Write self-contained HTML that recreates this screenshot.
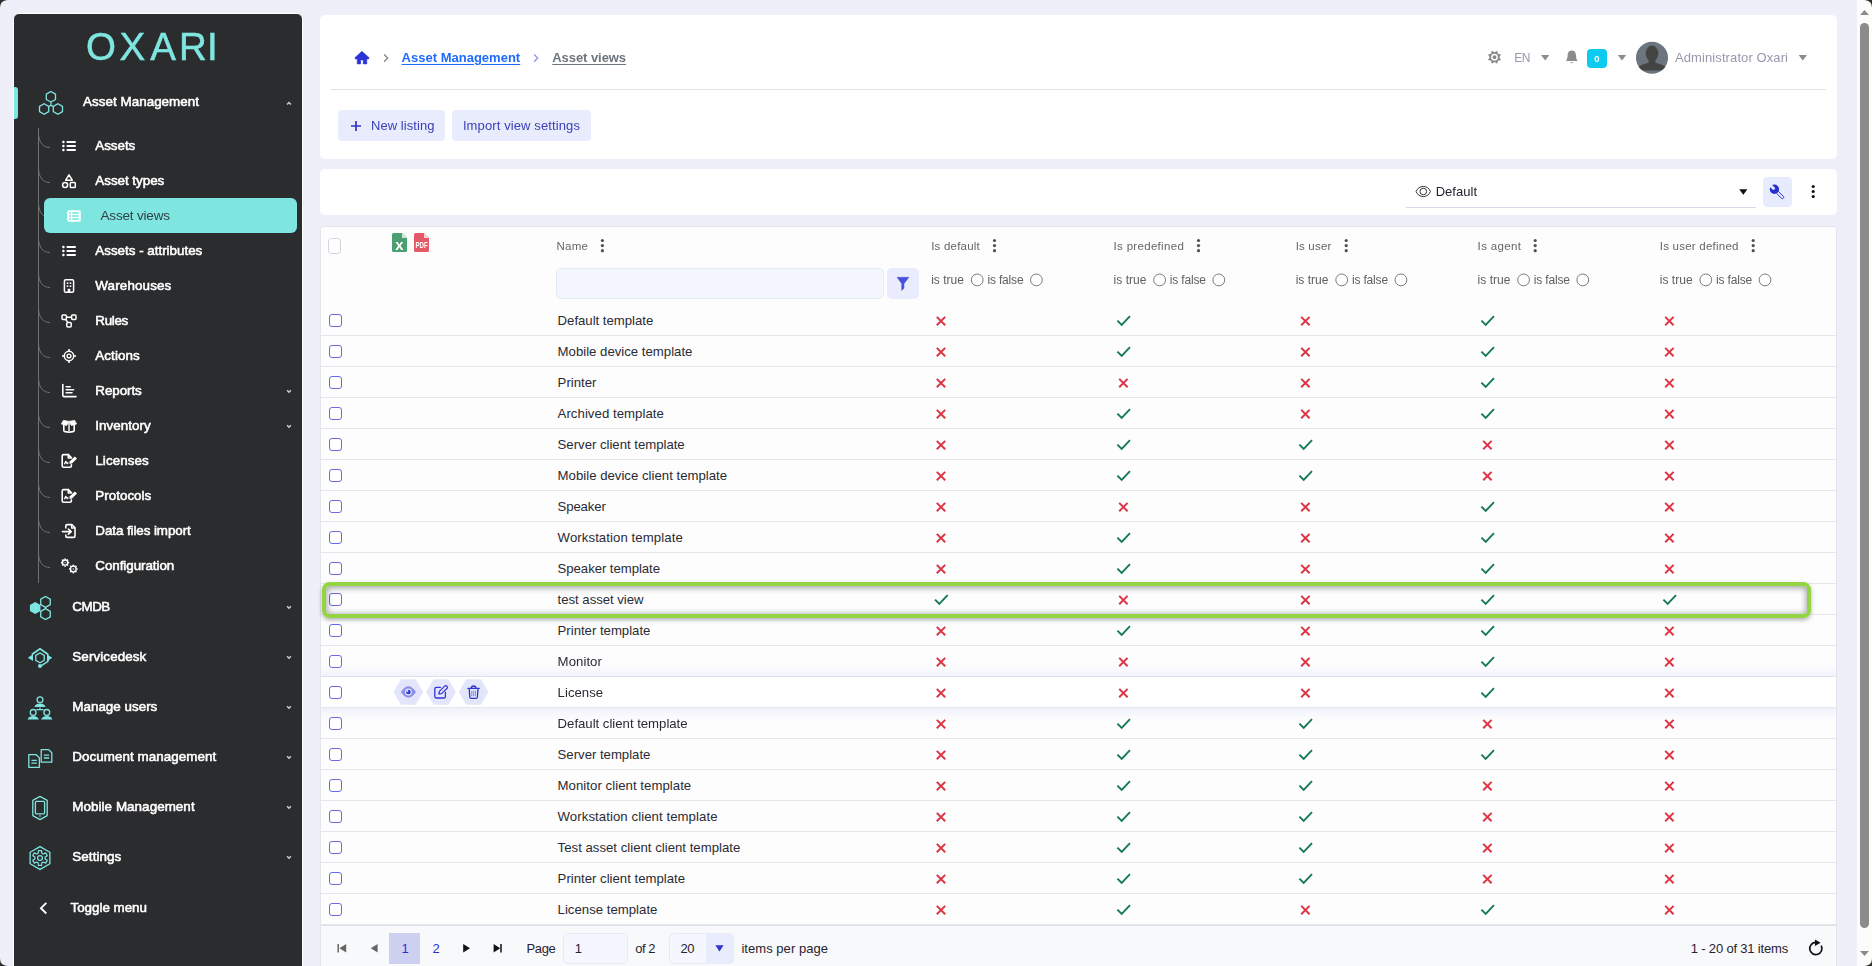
<!DOCTYPE html>
<html lang="en"><head><meta charset="utf-8"><title>Asset views</title>
<style>
*{box-sizing:border-box;margin:0;padding:0}
html,body{width:1872px;height:966px;overflow:hidden}
body{background:#eeeff8;font-family:"Liberation Sans",sans-serif;position:relative;color:#222}
.t{position:absolute;white-space:nowrap;line-height:20px;height:20px}
.abs{position:absolute}
svg{position:absolute;overflow:visible}
#side{position:absolute;left:13px;top:13px;width:290px;height:970px;background:#2b2c2e;border:1px solid #fff;border-radius:6px}
.card{position:absolute;background:#fff;border-radius:5px}
.btn{position:absolute;background:#e8ecfd;border-radius:4px}
.rowline{position:absolute;left:321px;width:1515px;height:1px;background:#e3e6ee}
.cb{position:absolute;width:13px;height:13px;border:1px solid #676be0;border-radius:3px;background:#fff}
.radio{position:absolute;width:13px;height:13px;border:1px solid #555;border-radius:50%;background:#fff}
.u{text-decoration:underline;text-underline-offset:1.5px}

</style></head>
<body>
<div id="sidewrap" style="position:absolute;left:0;top:0;width:310px;height:966px;will-change:transform">
<div id="side"></div>
<svg style="left:0px;top:0px" width="310" height="80"><text x="86.1 119.4 150.3 179.1 207.1" y="60.1" font-family="Liberation Sans, sans-serif" font-size="38.5" fill="#7fe5e0" stroke="#7fe5e0" stroke-width="0.5">OXARI</text></svg>
<div class="abs" style="left:14px;top:87px;width:4px;height:32px;background:#7fe5e0;border-radius:0 3px 3px 0"></div>
<svg style="left:0;top:0" width="310" height="966"><path d="M38.5 128V583" stroke="#707174" stroke-width="1" fill="none"/><path d="M38.5 134C39 142.5 43 147.5 50 147.5" stroke="#707174" stroke-width="1" fill="none"/><path d="M38.5 169C39 177.5 43 182.5 50 182.5" stroke="#707174" stroke-width="1" fill="none"/><path d="M38.5 204C39 212.5 43 217.5 50 217.5" stroke="#707174" stroke-width="1" fill="none"/><path d="M38.5 239C39 247.5 43 252.5 50 252.5" stroke="#707174" stroke-width="1" fill="none"/><path d="M38.5 274C39 282.5 43 287.5 50 287.5" stroke="#707174" stroke-width="1" fill="none"/><path d="M38.5 309C39 317.5 43 322.5 50 322.5" stroke="#707174" stroke-width="1" fill="none"/><path d="M38.5 344C39 352.5 43 357.5 50 357.5" stroke="#707174" stroke-width="1" fill="none"/><path d="M38.5 379C39 387.5 43 392.5 50 392.5" stroke="#707174" stroke-width="1" fill="none"/><path d="M38.5 414C39 422.5 43 427.5 50 427.5" stroke="#707174" stroke-width="1" fill="none"/><path d="M38.5 449C39 457.5 43 462.5 50 462.5" stroke="#707174" stroke-width="1" fill="none"/><path d="M38.5 484C39 492.5 43 497.5 50 497.5" stroke="#707174" stroke-width="1" fill="none"/><path d="M38.5 519C39 527.5 43 532.5 50 532.5" stroke="#707174" stroke-width="1" fill="none"/><path d="M38.5 554C39 562.5 43 567.5 50 567.5" stroke="#707174" stroke-width="1" fill="none"/><rect x="44" y="198" width="253" height="35" rx="6" fill="#7fe5e0"/><polygon points="55.49,99.45 50.90,102.10 46.31,99.45 46.31,94.15 50.90,91.50 55.49,94.15" fill="none" stroke="#7fe5e0" stroke-width="1.3"/><polygon points="48.69,111.65 44.10,114.30 39.51,111.65 39.51,106.35 44.10,103.70 48.69,106.35" fill="none" stroke="#7fe5e0" stroke-width="1.3"/><polygon points="62.49,111.65 57.90,114.30 53.31,111.65 53.31,106.35 57.90,103.70 62.49,106.35" fill="none" stroke="#7fe5e0" stroke-width="1.3"/><path d="M51 102.4V105.2M51 105.2L48.6 106.6M51 105.2L53.4 106.6" stroke="#7fe5e0" stroke-width="1.3" fill="none"/><rect x="62.2" y="140.8" width="2.4" height="2.4" rx="0.9" fill="#ffffff"/><rect x="66.4" y="141" width="9.6" height="2" rx="1" fill="#ffffff"/><rect x="62.2" y="144.8" width="2.4" height="2.4" rx="0.9" fill="#ffffff"/><rect x="66.4" y="145" width="9.6" height="2" rx="1" fill="#ffffff"/><rect x="62.2" y="148.8" width="2.4" height="2.4" rx="0.9" fill="#ffffff"/><rect x="66.4" y="149" width="9.6" height="2" rx="1" fill="#ffffff"/><rect x="62.2" y="245.8" width="2.4" height="2.4" rx="0.9" fill="#ffffff"/><rect x="66.4" y="246" width="9.6" height="2" rx="1" fill="#ffffff"/><rect x="62.2" y="249.8" width="2.4" height="2.4" rx="0.9" fill="#ffffff"/><rect x="66.4" y="250" width="9.6" height="2" rx="1" fill="#ffffff"/><rect x="62.2" y="253.8" width="2.4" height="2.4" rx="0.9" fill="#ffffff"/><rect x="66.4" y="254" width="9.6" height="2" rx="1" fill="#ffffff"/><path d="M69 174.8L72.3 180.2H65.7Z" fill="none" stroke="#ffffff" stroke-width="1.5" stroke-linejoin="round"/><circle cx="65.1" cy="185" r="2.5" fill="none" stroke="#ffffff" stroke-width="1.5"/><rect x="70.3" y="182.6" width="5" height="5" rx="0.8" fill="none" stroke="#ffffff" stroke-width="1.5"/><rect x="67.2" y="210.2" width="13.6" height="11.6" rx="1.8" fill="#ffffff"/><rect x="69.2" y="212.2" width="1.8" height="1.6" fill="#7fe5e0"/><rect x="72.2" y="212.2" width="6.6" height="1.6" fill="#7fe5e0"/><rect x="69.2" y="215.2" width="1.8" height="1.6" fill="#7fe5e0"/><rect x="72.2" y="215.2" width="6.6" height="1.6" fill="#7fe5e0"/><rect x="69.2" y="218.2" width="1.8" height="1.6" fill="#7fe5e0"/><rect x="72.2" y="218.2" width="6.6" height="1.6" fill="#7fe5e0"/><rect x="64.4" y="279.7" width="9.2" height="12.6" rx="1.4" fill="none" stroke="#ffffff" stroke-width="1.5"/><rect x="66.7" y="282.4" width="1.6" height="1.6" fill="#ffffff"/><rect x="69.7" y="282.4" width="1.6" height="1.6" fill="#ffffff"/><rect x="66.7" y="285.4" width="1.6" height="1.6" fill="#ffffff"/><rect x="69.7" y="285.4" width="1.6" height="1.6" fill="#ffffff"/><rect x="67.7" y="288.8" width="2.6" height="3.5" fill="#ffffff"/><rect x="62" y="315" width="4.4" height="4.4" rx="1" fill="none" stroke="#ffffff" stroke-width="1.5"/><rect x="71.6" y="315" width="4.4" height="4.4" rx="1" fill="none" stroke="#ffffff" stroke-width="1.5"/><rect x="66.8" y="322.6" width="4.4" height="4.4" rx="1" fill="none" stroke="#ffffff" stroke-width="1.5"/><path d="M66.4 317.2H71.6M65.4 319.4L68 322.6" stroke="#ffffff" stroke-width="1.5" fill="none"/><circle cx="69" cy="356" r="4.7" fill="none" stroke="#ffffff" stroke-width="1.5"/><circle cx="69" cy="356" r="1.9" fill="none" stroke="#ffffff" stroke-width="1.4"/><path d="M69 349V351.5M69 360.5V363M62 356H64.5M73.5 356H76" stroke="#ffffff" stroke-width="1.5"/><path d="M62.8 384.5V395.6Q62.8 396.6 63.8 396.6H76" stroke="#ffffff" stroke-width="1.6" fill="none" stroke-linecap="round"/><path d="M66.2 386.8H70.2M66.2 389.8H73.6M66.2 392.8H72" stroke="#ffffff" stroke-width="1.6" stroke-linecap="round"/><path d="M63.8 424.4V430.2Q63.8 431.4 65 431.6L69 432.2L73 431.6Q74.2 431.4 74.2 430.2V424.4" fill="none" stroke="#ffffff" stroke-width="1.6" stroke-linejoin="round"/><path d="M63.4 420.4L69 421.4L74.6 420.4L76.6 424L71.4 425.4L69 421.8L66.6 425.4L61.4 424Z" fill="#ffffff" stroke="#ffffff" stroke-width="0.8" stroke-linejoin="round"/><path d="M69 423V431.6" stroke="#ffffff" stroke-width="1.4"/><path d="M68.4 454.6H63.6Q62.2 454.6 62.2 456V465.8Q62.2 467.2 63.6 467.2H70Q71.4 467.2 71.4 465.8V464.8" fill="none" stroke="#ffffff" stroke-width="1.6" stroke-linecap="round"/><path d="M68.4 454.6L71.6 457.8M68.2 455V458H71.2" stroke="#ffffff" stroke-width="1.4" stroke-linecap="round" stroke-linejoin="round" fill="none"/><path d="M64.4 464.2L65.8 461.4L67.2 463.6L68.4 462.6" fill="none" stroke="#ffffff" stroke-width="1.3" stroke-linejoin="round"/><path d="M69.4 464L69.8 461.2L74.8 456.4L77 458.4L72 463.4Z" fill="#ffffff"/><path d="M68.4 489.6H63.6Q62.2 489.6 62.2 491V500.8Q62.2 502.2 63.6 502.2H70Q71.4 502.2 71.4 500.8V499.8" fill="none" stroke="#ffffff" stroke-width="1.6" stroke-linecap="round"/><path d="M68.4 489.6L71.6 492.8M68.2 490V493H71.2" stroke="#ffffff" stroke-width="1.4" stroke-linecap="round" stroke-linejoin="round" fill="none"/><path d="M64.4 499.2L65.8 496.4L67.2 498.6L68.4 497.6" fill="none" stroke="#ffffff" stroke-width="1.3" stroke-linejoin="round"/><path d="M69.4 499L69.8 496.2L74.8 491.4L77 493.4L72 498.4Z" fill="#ffffff"/><path d="M65.8 528.6V526Q65.8 524.6 67.2 524.6H71.8L75 527.8V536Q75 537.4 73.6 537.4H67.2Q65.8 537.4 65.8 536V534.6" fill="none" stroke="#ffffff" stroke-width="1.6" stroke-linejoin="round"/><path d="M71.6 525V528H74.6" fill="none" stroke="#ffffff" stroke-width="1.3" stroke-linejoin="round"/><path d="M62.4 531.6H71M68.4 529L71.2 531.6L68.4 534.2" fill="none" stroke="#ffffff" stroke-width="1.6" stroke-linecap="round" stroke-linejoin="round"/><circle cx="65.1" cy="562.6" r="2.6" fill="none" stroke="#ffffff" stroke-width="1.3"/><path d="M67.90 562.60L69.20 562.60" stroke="#ffffff" stroke-width="1.7"/><path d="M67.08 564.58L68.00 565.50" stroke="#ffffff" stroke-width="1.7"/><path d="M65.10 565.40L65.10 566.70" stroke="#ffffff" stroke-width="1.7"/><path d="M63.12 564.58L62.20 565.50" stroke="#ffffff" stroke-width="1.7"/><path d="M62.30 562.60L61.00 562.60" stroke="#ffffff" stroke-width="1.7"/><path d="M63.12 560.62L62.20 559.70" stroke="#ffffff" stroke-width="1.7"/><path d="M65.10 559.80L65.10 558.50" stroke="#ffffff" stroke-width="1.7"/><path d="M67.08 560.62L68.00 559.70" stroke="#ffffff" stroke-width="1.7"/><circle cx="65.1" cy="562.6" r="0.6" fill="#ffffff"/><circle cx="73.3" cy="569" r="2.8" fill="none" stroke="#ffffff" stroke-width="1.3"/><path d="M76.30 569.00L77.60 569.00" stroke="#ffffff" stroke-width="1.7"/><path d="M75.42 571.12L76.34 572.04" stroke="#ffffff" stroke-width="1.7"/><path d="M73.30 572.00L73.30 573.30" stroke="#ffffff" stroke-width="1.7"/><path d="M71.18 571.12L70.26 572.04" stroke="#ffffff" stroke-width="1.7"/><path d="M70.30 569.00L69.00 569.00" stroke="#ffffff" stroke-width="1.7"/><path d="M71.18 566.88L70.26 565.96" stroke="#ffffff" stroke-width="1.7"/><path d="M73.30 566.00L73.30 564.70" stroke="#ffffff" stroke-width="1.7"/><path d="M75.42 566.88L76.34 565.96" stroke="#ffffff" stroke-width="1.7"/><circle cx="73.3" cy="569" r="0.7" fill="#ffffff"/><polygon points="40.48,611.05 35.20,614.10 29.92,611.05 29.92,604.95 35.20,601.90 40.48,604.95" fill="#7fe5e0"/><polygon points="50.26,604.65 45.50,607.40 40.74,604.65 40.74,599.15 45.50,596.40 50.26,599.15" fill="none" stroke="#7fe5e0" stroke-width="1.3"/><polygon points="50.26,616.85 45.50,619.60 40.74,616.85 40.74,611.35 45.50,608.60 50.26,611.35" fill="none" stroke="#7fe5e0" stroke-width="1.3"/><polygon points="44.24,660.25 40.00,662.70 35.76,660.25 35.76,655.35 40.00,652.90 44.24,655.35" fill="none" stroke="#7fe5e0" stroke-width="1.3"/><path d="M31.8 654.4L40 648.8L48.2 654.4" fill="none" stroke="#7fe5e0" stroke-width="1.8" stroke-linejoin="miter"/><path d="M48 654.4V661.4L41 665.8" fill="none" stroke="#7fe5e0" stroke-width="1.4" stroke-linejoin="round"/><path d="M33 654.1999999999999L27.8 657.8L33 661.0Z" fill="#7fe5e0"/><path d="M47 654.1999999999999L52.2 657.8L47 661.4Z" fill="#7fe5e0"/><circle cx="40" cy="665.9" r="2" fill="#7fe5e0"/><circle cx="40" cy="699.8" r="2.9" fill="none" stroke="#7fe5e0" stroke-width="1.3"/><path d="M34.4 707.0Q35.4 703.5999999999999 40 703.4Q44.6 703.5999999999999 45.6 707.0Z" fill="#7fe5e0"/><circle cx="33.2" cy="712.4" r="2.9" fill="none" stroke="#7fe5e0" stroke-width="1.3"/><path d="M27.6 719.6Q28.6 716.1999999999999 33.2 716.0Q37.800000000000004 716.1999999999999 38.800000000000004 719.6Z" fill="#7fe5e0"/><circle cx="46.8" cy="712.4" r="2.9" fill="none" stroke="#7fe5e0" stroke-width="1.3"/><path d="M41.199999999999996 719.6Q42.199999999999996 716.1999999999999 46.8 716.0Q51.4 716.1999999999999 52.4 719.6Z" fill="#7fe5e0"/><path d="M40 707.4V709.4M36.4 709.6H43.6" stroke="#7fe5e0" stroke-width="1.2"/><path d="M28.8 754.7H36.199999999999996L39.4 757.9000000000001V767.3000000000001H28.8Z" fill="none" stroke="#7fe5e0" stroke-width="1.3" stroke-linejoin="round"/><path d="M31.400000000000002 760.3000000000001H36.8M31.400000000000002 763.1H36.8" stroke="#7fe5e0" stroke-width="1.3"/><path d="M41.2 749.6H48.6L51.800000000000004 752.8000000000001V762.2H41.2Z" fill="none" stroke="#7fe5e0" stroke-width="1.3" stroke-linejoin="round"/><path d="M43.800000000000004 755.2H49.2M43.800000000000004 758.0H49.2" stroke="#7fe5e0" stroke-width="1.3"/><path d="M40 796.4L47.2 800.4V815.6L40 819.6L32.8 815.6V800.4Z" fill="none" stroke="#7fe5e0" stroke-width="1.3" stroke-linejoin="round"/><rect x="35.4" y="801.4" width="9.2" height="12.4" rx="1" fill="none" stroke="#7fe5e0" stroke-width="1.3"/><path d="M39 816H41" stroke="#7fe5e0" stroke-width="1.2"/><polygon points="49.87,863.70 40.00,869.40 30.13,863.70 30.13,852.30 40.00,846.60 49.87,852.30" fill="none" stroke="#7fe5e0" stroke-width="1.3"/><circle cx="40" cy="858" r="2.4" fill="none" stroke="#7fe5e0" stroke-width="1.2"/><polygon points="38.42,850.57 41.58,850.57 41.78,853.11 43.34,854.02 45.65,852.91 47.23,855.65 45.12,857.10 45.12,858.90 47.23,860.35 45.65,863.09 43.34,861.98 41.78,862.89 41.58,865.43 38.42,865.43 38.22,862.89 36.66,861.98 34.35,863.09 32.77,860.35 34.88,858.90 34.88,857.10 32.77,855.65 34.35,852.91 36.66,854.02 38.22,853.11" fill="none" stroke="#7fe5e0" stroke-width="1.2" stroke-linejoin="round"/><path d="M287.1 104.6L289 102.6L290.9 104.6" stroke="#cfcfcf" stroke-width="1.4" fill="none"/><path d="M287.1 390.29999999999995L289 392.29999999999995L290.9 390.29999999999995" stroke="#cfcfcf" stroke-width="1.4" fill="none"/><path d="M287.1 425.29999999999995L289 427.29999999999995L290.9 425.29999999999995" stroke="#cfcfcf" stroke-width="1.4" fill="none"/><path d="M287.1 606.3L289 608.3L290.9 606.3" stroke="#cfcfcf" stroke-width="1.4" fill="none"/><path d="M287.1 656.3L289 658.3L290.9 656.3" stroke="#cfcfcf" stroke-width="1.4" fill="none"/><path d="M287.1 706.3L289 708.3L290.9 706.3" stroke="#cfcfcf" stroke-width="1.4" fill="none"/><path d="M287.1 756.3L289 758.3L290.9 756.3" stroke="#cfcfcf" stroke-width="1.4" fill="none"/><path d="M287.1 806.3L289 808.3L290.9 806.3" stroke="#cfcfcf" stroke-width="1.4" fill="none"/><path d="M287.1 856.3L289 858.3L290.9 856.3" stroke="#cfcfcf" stroke-width="1.4" fill="none"/><path d="M46.3 902.9L41 908.2L46.3 913.5" stroke="#ffffff" stroke-width="1.9" fill="none"/></svg>
<span id="t1" class="t " style="left:83px;top:91.5px;font-size:13.4px;font-weight:400;color:#fff;letter-spacing:0.042px;-webkit-text-stroke:0.55px #fff;">Asset Management</span>
<span id="t2" class="t " style="left:95.3px;top:135.5px;font-size:13.4px;font-weight:400;color:#fff;letter-spacing:-0.037px;-webkit-text-stroke:0.55px #fff;">Assets</span>
<span id="t3" class="t " style="left:95.3px;top:170.5px;font-size:13.4px;font-weight:400;color:#fff;letter-spacing:-0.022px;-webkit-text-stroke:0.55px #fff;">Asset types</span>
<span id="t4" class="t " style="left:100.5px;top:205.5px;font-size:13.5px;font-weight:400;color:#33404a;letter-spacing:-0.178px;">Asset views</span>
<span id="t5" class="t " style="left:95.3px;top:240.5px;font-size:13.4px;font-weight:400;color:#fff;letter-spacing:-0.01px;-webkit-text-stroke:0.55px #fff;">Assets - attributes</span>
<span id="t6" class="t " style="left:95.3px;top:275.5px;font-size:13.4px;font-weight:400;color:#fff;letter-spacing:0.146px;-webkit-text-stroke:0.55px #fff;">Warehouses</span>
<span id="t7" class="t " style="left:95.3px;top:310.5px;font-size:13.4px;font-weight:400;color:#fff;letter-spacing:-0.312px;-webkit-text-stroke:0.55px #fff;">Rules</span>
<span id="t8" class="t " style="left:95.3px;top:345.5px;font-size:13.4px;font-weight:400;color:#fff;letter-spacing:0.096px;-webkit-text-stroke:0.55px #fff;">Actions</span>
<span id="t9" class="t " style="left:95.3px;top:380.5px;font-size:13.4px;font-weight:400;color:#fff;letter-spacing:-0.065px;-webkit-text-stroke:0.55px #fff;">Reports</span>
<span id="t10" class="t " style="left:95.3px;top:415.5px;font-size:13.4px;font-weight:400;color:#fff;letter-spacing:0.051px;-webkit-text-stroke:0.55px #fff;">Inventory</span>
<span id="t11" class="t " style="left:95.3px;top:450.5px;font-size:13.4px;font-weight:400;color:#fff;letter-spacing:0.092px;-webkit-text-stroke:0.55px #fff;">Licenses</span>
<span id="t12" class="t " style="left:95.3px;top:485.5px;font-size:13.4px;font-weight:400;color:#fff;letter-spacing:0.021px;-webkit-text-stroke:0.55px #fff;">Protocols</span>
<span id="t13" class="t " style="left:95.3px;top:520.5px;font-size:13.4px;font-weight:400;color:#fff;letter-spacing:-0.078px;-webkit-text-stroke:0.55px #fff;">Data files import</span>
<span id="t14" class="t " style="left:95.3px;top:555.5px;font-size:13.4px;font-weight:400;color:#fff;letter-spacing:-0.055px;-webkit-text-stroke:0.55px #fff;">Configuration</span>
<span id="t15" class="t " style="left:72.3px;top:596.5px;font-size:13.4px;font-weight:400;color:#fff;letter-spacing:-0.479px;-webkit-text-stroke:0.55px #fff;">CMDB</span>
<span id="t16" class="t " style="left:72.3px;top:646.5px;font-size:13.4px;font-weight:400;color:#fff;letter-spacing:0.106px;-webkit-text-stroke:0.55px #fff;">Servicedesk</span>
<span id="t17" class="t " style="left:72.3px;top:696.5px;font-size:13.4px;font-weight:400;color:#fff;letter-spacing:0.013px;-webkit-text-stroke:0.55px #fff;">Manage users</span>
<span id="t18" class="t " style="left:72.3px;top:746.5px;font-size:13.4px;font-weight:400;color:#fff;letter-spacing:0.06px;-webkit-text-stroke:0.55px #fff;">Document management</span>
<span id="t19" class="t " style="left:72.3px;top:796.5px;font-size:13.4px;font-weight:400;color:#fff;letter-spacing:0.061px;-webkit-text-stroke:0.55px #fff;">Mobile Management</span>
<span id="t20" class="t " style="left:72.3px;top:846.5px;font-size:13.4px;font-weight:400;color:#fff;letter-spacing:0.087px;-webkit-text-stroke:0.55px #fff;">Settings</span>
<span id="t21" class="t " style="left:70.5px;top:897.5px;font-size:13.4px;font-weight:400;color:#fff;letter-spacing:-0.019px;-webkit-text-stroke:0.55px #fff;">Toggle menu</span>
</div>
<div class="card" style="left:320px;top:15px;width:1517px;height:143.5px"></div>
<div class="card" style="left:320px;top:169px;width:1517px;height:46px"></div>
<div class="abs" style="left:331px;top:89px;width:1495px;height:1px;background:#dfe2ea"></div>
<div class="btn" style="left:1763px;top:177px;width:29px;height:30px;border-radius:4.5px;background:#e6ebfd"></div>
<svg style="left:0;top:0" width="1872" height="230"><path d="M361.9 51.2L355.1 57.5V58.9H357.2V64H360.7V59.9H363.2V64H366.8V58.9H368.9V57.5Z" fill="#2b35d4" stroke="#2b35d4" stroke-width="0.5" stroke-linejoin="round"/><path d="M384.1 54.4L387.7 58.1L384.1 61.8" stroke="#8a8a8a" stroke-width="1.4" fill="none"/><path d="M534.1 54.4L537.7 58.1L534.1 61.8" stroke="#9598ea" stroke-width="1.4" fill="none"/><polygon points="1497.18,50.73 1497.96,53.74 1500.97,54.52 1499.40,57.20 1500.97,59.88 1497.96,60.66 1497.18,63.67 1494.50,62.10 1491.82,63.67 1491.04,60.66 1488.03,59.88 1489.60,57.20 1488.03,54.52 1491.04,53.74 1491.82,50.73 1494.50,52.30" fill="#888"/><circle cx="1494.5" cy="57.2" r="3.4" fill="#fff"/><circle cx="1494.5" cy="57.2" r="1.9" fill="#888"/><path d="M1541.0 55.099999999999994H1549.4L1545.2 60.5Z" fill="#8c8c8c"/><path d="M1617.8 55.099999999999994H1626.2L1622 60.5Z" fill="#8c8c8c"/><path d="M1798.6 55.099999999999994H1807.0L1802.8 60.5Z" fill="#8c8c8c"/><path d="M1571.8 50.4C1568.3999999999999 50.4 1567.6 53.4 1567.6 55.8C1567.6 58.6 1566.6 59.8 1566.0 61H1577.6C1577.0 59.8 1576.0 58.6 1576.0 55.8C1576.0 53.4 1575.2 50.4 1571.8 50.4Z" fill="#8c8c8c"/><path d="M1570.2 62.2H1573.3999999999999Q1571.8 64.2 1570.2 62.2Z" fill="#8c8c8c"/><clipPath id="avc"><circle cx="1652" cy="57.8" r="16"/></clipPath><circle cx="1652" cy="57.8" r="16" fill="#6c757d"/><g clip-path="url(#avc)"><ellipse cx="1652" cy="53.4" rx="6.3" ry="7.8" fill="#444"/><path d="M1648.6 58H1655.4V62.6L1663.6 65.6Q1666.4 66.6 1667.4 70.4H1636.6Q1637.6 66.6 1640.4 65.6L1648.6 62.6Z" fill="#444"/><rect x="1636" y="70" width="32" height="4" fill="#6c757d" opacity="0"/></g><path d="M1416.1 191.5C1418.7 184.7 1427.8999999999999 184.7 1430.5 191.5C1427.8999999999999 198.3 1418.7 198.3 1416.1 191.5Z" fill="none" stroke="#333" stroke-width="1"/><circle cx="1423.3" cy="191.5" r="3.3" fill="none" stroke="#333" stroke-width="1"/><path d="M1739.2 189.3H1747.3999999999999L1743.3 194.7Z" fill="#111"/><circle cx="1813.2" cy="186.5" r="1.55" fill="#111"/><circle cx="1813.2" cy="191.5" r="1.55" fill="#111"/><circle cx="1813.2" cy="196.5" r="1.55" fill="#111"/><g transform="translate(1774.4 189.3) rotate(45)"><rect x="3" y="-1.3" width="9.6" height="2.6" rx="1.2" fill="#e6ebfd" stroke="#2a2fd0" stroke-width="0.9"/><circle cx="0" cy="0" r="4.7" fill="#2a2fd0"/><rect x="-1.5" y="-6" width="3" height="6.2" rx="1.3" fill="#e6ebfd" transform="rotate(-90)"/></g></svg>
<span id="t22" class="t u" style="left:401.6px;top:47.5px;font-size:13px;font-weight:700;color:#1f6bff;letter-spacing:0.008px;">Asset Management</span>
<span id="t23" class="t u" style="left:552.3px;top:47.5px;font-size:13px;font-weight:700;color:#6c757d;letter-spacing:-0.064px;">Asset views</span>
<div class="btn" style="left:338px;top:110px;width:107px;height:31px"></div>
<div class="btn" style="left:452px;top:110px;width:139px;height:31px"></div>
<svg style="left:350px;top:120px" width="12" height="12"><path d="M6 1V11M1 6H11" stroke="#2f34c8" stroke-width="1.7"/></svg>
<div style="position:absolute;left:330px;top:105px;width:300px;height:40px;will-change:transform"><span id="t24" class="t " style="left:41px;top:10.5px;font-size:13px;font-weight:400;color:#3a3eb8;letter-spacing:0.054px;">New listing</span><span id="t25" class="t " style="left:132.89999999999998px;top:10.5px;font-size:13px;font-weight:400;color:#3a3eb8;letter-spacing:0.112px;">Import view settings</span></div>
<span id="t26" class="t " style="left:1514.3px;top:47.6px;font-size:12px;font-weight:400;color:#9c96ab;letter-spacing:-0.672px;">EN</span>
<div class="abs" style="left:1587px;top:48.6px;width:20px;height:19.4px;background:#0dcaf0;border-radius:4px"></div>
<span id="t27" class="t " style="left:1594.3px;top:48.9px;font-size:9.5px;font-weight:700;color:#fff;letter-spacing:0px;">0</span>
<span id="t28" class="t " style="left:1675px;top:47.5px;font-size:13px;font-weight:400;color:#9c96ab;letter-spacing:0.097px;">Administrator Oxari</span>
<div class="abs" style="left:1406px;top:207px;width:350px;height:1px;background:#d5d8e6"></div>
<span id="t29" class="t " style="left:1435.7px;top:181.5px;font-size:13px;font-weight:400;color:#23232e;letter-spacing:0.033px;">Default</span>
<div class="abs" style="left:320px;top:225.5px;width:1517px;height:760px;background:#fdfdfe;border:1px solid #e3e5ec;border-radius:3px 3px 0 0"></div>
<div class="abs" style="left:328px;top:238px;width:13px;height:15.6px;border:1px solid #cfd4dc;border-radius:3.5px;background:#fff"></div>
<div class="abs" style="left:556px;top:268px;width:328px;height:31px;background:#f5f7fe;border:1px solid #e6e9f8;border-radius:5px"></div>
<div class="btn" style="left:887px;top:268px;width:32px;height:31px;border-radius:5px"></div>
<div style="position:absolute;left:0;top:0;width:1857px;height:304px;will-change:transform"><span id="t30" class="t " style="left:556.4px;top:235.9px;font-size:11.5px;font-weight:400;color:#666;letter-spacing:0.304px;">Name</span><span id="t31" class="t " style="left:931.2px;top:235.9px;font-size:11.5px;font-weight:400;color:#666;letter-spacing:0.203px;">Is default</span><span id="t32" class="t " style="left:1113.6px;top:235.9px;font-size:11.5px;font-weight:400;color:#666;letter-spacing:0.308px;">Is predefined</span><span id="t33" class="t " style="left:1295.7px;top:235.9px;font-size:11.5px;font-weight:400;color:#666;letter-spacing:0.181px;">Is user</span><span id="t34" class="t " style="left:1477.6px;top:235.9px;font-size:11.5px;font-weight:400;color:#666;letter-spacing:0.354px;">Is agent</span><span id="t35" class="t " style="left:1659.8px;top:235.9px;font-size:11.5px;font-weight:400;color:#666;letter-spacing:0.226px;">Is user defined</span><span id="t36" class="t " style="left:931.2px;top:270.2px;font-size:12px;font-weight:400;color:#5f5f5f;letter-spacing:0.019px;">is true</span><span id="t37" class="t " style="left:987.4000000000001px;top:270.2px;font-size:12px;font-weight:400;color:#5f5f5f;letter-spacing:-0.166px;">is false</span><span id="t38" class="t " style="left:1113.6px;top:270.2px;font-size:12px;font-weight:400;color:#5f5f5f;letter-spacing:0.019px;">is true</span><span id="t39" class="t " style="left:1169.8px;top:270.2px;font-size:12px;font-weight:400;color:#5f5f5f;letter-spacing:-0.166px;">is false</span><span id="t40" class="t " style="left:1295.7px;top:270.2px;font-size:12px;font-weight:400;color:#5f5f5f;letter-spacing:0.019px;">is true</span><span id="t41" class="t " style="left:1351.9px;top:270.2px;font-size:12px;font-weight:400;color:#5f5f5f;letter-spacing:-0.166px;">is false</span><span id="t42" class="t " style="left:1477.6px;top:270.2px;font-size:12px;font-weight:400;color:#5f5f5f;letter-spacing:0.019px;">is true</span><span id="t43" class="t " style="left:1533.8px;top:270.2px;font-size:12px;font-weight:400;color:#5f5f5f;letter-spacing:-0.166px;">is false</span><span id="t44" class="t " style="left:1659.8px;top:270.2px;font-size:12px;font-weight:400;color:#5f5f5f;letter-spacing:0.019px;">is true</span><span id="t45" class="t " style="left:1716.0px;top:270.2px;font-size:12px;font-weight:400;color:#5f5f5f;letter-spacing:-0.166px;">is false</span></div>
<div class="abs" style="left:321px;top:335px;width:1515px;height:1px;background:#e4e7ee"></div>
<div class="cb" style="left:329px;top:313.90000000000003px"></div>
<span id="t46" class="t " style="left:557.6px;top:310.6px;font-size:13.2px;font-weight:400;color:#2b2b33;letter-spacing:-0.022px;">Default template</span>
<div class="abs" style="left:321px;top:366px;width:1515px;height:1px;background:#e4e7ee"></div>
<div class="cb" style="left:329px;top:344.90000000000003px"></div>
<span id="t47" class="t " style="left:557.6px;top:341.6px;font-size:13.2px;font-weight:400;color:#2b2b33;letter-spacing:-0.004px;">Mobile device template</span>
<div class="abs" style="left:321px;top:397px;width:1515px;height:1px;background:#e4e7ee"></div>
<div class="cb" style="left:329px;top:375.90000000000003px"></div>
<span id="t48" class="t " style="left:557.6px;top:372.6px;font-size:13.2px;font-weight:400;color:#2b2b33;letter-spacing:-0.007px;">Printer</span>
<div class="abs" style="left:321px;top:428px;width:1515px;height:1px;background:#e4e7ee"></div>
<div class="cb" style="left:329px;top:406.90000000000003px"></div>
<span id="t49" class="t " style="left:557.6px;top:403.6px;font-size:13.2px;font-weight:400;color:#2b2b33;letter-spacing:0.046px;">Archived template</span>
<div class="abs" style="left:321px;top:459px;width:1515px;height:1px;background:#e4e7ee"></div>
<div class="cb" style="left:329px;top:437.90000000000003px"></div>
<span id="t50" class="t " style="left:557.6px;top:434.6px;font-size:13.2px;font-weight:400;color:#2b2b33;letter-spacing:-0.021px;">Server client template</span>
<div class="abs" style="left:321px;top:490px;width:1515px;height:1px;background:#e4e7ee"></div>
<div class="cb" style="left:329px;top:468.90000000000003px"></div>
<span id="t51" class="t " style="left:557.6px;top:465.6px;font-size:13.2px;font-weight:400;color:#2b2b33;letter-spacing:0.006px;">Mobile device client template</span>
<div class="abs" style="left:321px;top:521px;width:1515px;height:1px;background:#e4e7ee"></div>
<div class="cb" style="left:329px;top:499.90000000000003px"></div>
<span id="t52" class="t " style="left:557.6px;top:496.6px;font-size:13.2px;font-weight:400;color:#2b2b33;letter-spacing:-0.154px;">Speaker</span>
<div class="abs" style="left:321px;top:552px;width:1515px;height:1px;background:#e4e7ee"></div>
<div class="cb" style="left:329px;top:530.9px"></div>
<span id="t53" class="t " style="left:557.6px;top:527.6px;font-size:13.2px;font-weight:400;color:#2b2b33;letter-spacing:0.082px;">Workstation template</span>
<div class="abs" style="left:321px;top:583px;width:1515px;height:1px;background:#e4e7ee"></div>
<div class="cb" style="left:329px;top:561.9px"></div>
<span id="t54" class="t " style="left:557.6px;top:558.6px;font-size:13.2px;font-weight:400;color:#2b2b33;letter-spacing:-0.065px;">Speaker template</span>
<div class="abs" style="left:321px;top:614px;width:1515px;height:1px;background:#e4e7ee"></div>
<div class="cb" style="left:329px;top:592.9px"></div>
<span id="t55" class="t " style="left:557.6px;top:589.6px;font-size:13.2px;font-weight:400;color:#2b2b33;letter-spacing:-0.036px;">test asset view</span>
<div class="abs" style="left:321px;top:645px;width:1515px;height:1px;background:#e4e7ee"></div>
<div class="cb" style="left:329px;top:623.9px"></div>
<span id="t56" class="t " style="left:557.6px;top:620.6px;font-size:13.2px;font-weight:400;color:#2b2b33;letter-spacing:-0.02px;">Printer template</span>
<div class="abs" style="left:321px;top:676px;width:1515px;height:1px;background:#e4e7ee"></div>
<div class="cb" style="left:329px;top:654.9px"></div>
<span id="t57" class="t " style="left:557.6px;top:651.6px;font-size:13.2px;font-weight:400;color:#2b2b33;letter-spacing:0.053px;">Monitor</span>
<div class="abs" style="left:321px;top:646.9px;width:1515px;height:91px;overflow:hidden"><div class="abs" style="left:-20px;top:30px;width:1555px;height:31px;background:#fff;box-shadow:0 0 12px 3px rgba(210,215,245,.42)"></div></div>
<div class="abs" style="left:321px;top:707px;width:1515px;height:1px;background:#e4e7ee"></div>
<div class="cb" style="left:329px;top:685.9px"></div>
<span id="t58" class="t " style="left:557.6px;top:682.6px;font-size:13.2px;font-weight:400;color:#2b2b33;letter-spacing:0.022px;">License</span>
<div class="abs" style="left:321px;top:738px;width:1515px;height:1px;background:#e4e7ee"></div>
<div class="cb" style="left:329px;top:716.9px"></div>
<span id="t59" class="t " style="left:557.6px;top:713.6px;font-size:13.2px;font-weight:400;color:#2b2b33;letter-spacing:-0.022px;">Default client template</span>
<div class="abs" style="left:321px;top:769px;width:1515px;height:1px;background:#e4e7ee"></div>
<div class="cb" style="left:329px;top:747.9px"></div>
<span id="t60" class="t " style="left:557.6px;top:744.6px;font-size:13.2px;font-weight:400;color:#2b2b33;letter-spacing:-0.021px;">Server template</span>
<div class="abs" style="left:321px;top:800px;width:1515px;height:1px;background:#e4e7ee"></div>
<div class="cb" style="left:329px;top:778.9px"></div>
<span id="t61" class="t " style="left:557.6px;top:775.6px;font-size:13.2px;font-weight:400;color:#2b2b33;letter-spacing:0.042px;">Monitor client template</span>
<div class="abs" style="left:321px;top:831px;width:1515px;height:1px;background:#e4e7ee"></div>
<div class="cb" style="left:329px;top:809.9px"></div>
<span id="t62" class="t " style="left:557.6px;top:806.6px;font-size:13.2px;font-weight:400;color:#2b2b33;letter-spacing:0.07px;">Workstation client template</span>
<div class="abs" style="left:321px;top:862px;width:1515px;height:1px;background:#e4e7ee"></div>
<div class="cb" style="left:329px;top:840.9px"></div>
<span id="t63" class="t " style="left:557.6px;top:837.6px;font-size:13.2px;font-weight:400;color:#2b2b33;letter-spacing:0.006px;">Test asset client client template</span>
<div class="abs" style="left:321px;top:893px;width:1515px;height:1px;background:#e4e7ee"></div>
<div class="cb" style="left:329px;top:871.9px"></div>
<span id="t64" class="t " style="left:557.6px;top:868.6px;font-size:13.2px;font-weight:400;color:#2b2b33;letter-spacing:-0.002px;">Printer client template</span>
<div class="abs" style="left:321px;top:924px;width:1515px;height:1px;background:#e4e7ee"></div>
<div class="cb" style="left:329px;top:902.9px"></div>
<span id="t65" class="t " style="left:557.6px;top:899.6px;font-size:13.2px;font-weight:400;color:#2b2b33;letter-spacing:0.006px;">License template</span>
<div class="abs" style="left:321.7px;top:581.6px;width:1489.8px;height:36.9px;border:4.2px solid #92d441;border-radius:7.5px;box-shadow:0 2px 4px rgba(0,0,0,.3), inset 0 1px 6px 1px rgba(0,0,0,.36)"></div>
<div class="abs" style="left:321px;top:924.5px;width:1515px;height:42px;background:#f8f9fb;border-top:1.5px solid #dee1ea"></div>
<div class="abs" style="left:389px;top:933px;width:31px;height:31px;background:#cdd0f0"></div>
<span id="t66" class="t " style="left:401.6px;top:938.6px;font-size:13px;font-weight:400;color:#2b2fd0;letter-spacing:0px;">1</span>
<span id="t67" class="t " style="left:432.6px;top:938.6px;font-size:13px;font-weight:400;color:#2b2fd0;letter-spacing:0px;">2</span>
<span id="t68" class="t " style="left:526.4px;top:938.6px;font-size:13px;font-weight:400;color:#2a2230;letter-spacing:-0.325px;">Page</span>
<div class="abs" style="left:563px;top:933px;width:65px;height:31px;background:#f5f7fe;border:1px solid #e6e9f8;border-radius:5px"></div>
<span id="t69" class="t " style="left:574.8px;top:938.6px;font-size:13px;font-weight:400;color:#2a2230;letter-spacing:0px;">1</span>
<span id="t70" class="t " style="left:635.2px;top:938.6px;font-size:13px;font-weight:400;color:#2a2230;letter-spacing:-0.496px;">of 2</span>
<div class="abs" style="left:669px;top:933px;width:65px;height:31px;background:#f5f7fe;border:1px solid #e6e9f8;border-radius:5px"></div>
<div class="abs" style="left:706px;top:933px;width:28px;height:31px;background:#e8ecfd;border-radius:0 5px 5px 0"></div>
<span id="t71" class="t " style="left:680.4px;top:938.6px;font-size:13px;font-weight:400;color:#2a2230;letter-spacing:-0.269px;">20</span>
<span id="t72" class="t " style="left:741.4px;top:938.6px;font-size:13px;font-weight:400;color:#2a2230;letter-spacing:0.046px;">items per page</span>
<span id="t73" class="t " style="left:1690.8px;top:939.0px;font-size:13px;font-weight:400;color:#2a2230;letter-spacing:-0.18px;">1 - 20 of 31 items</span>
<svg style="left:0;top:0" width="1872" height="966"><path d="M393.6 233H402L407 238V250.4Q407 252 405.4 252H393.6Q392 252 392 250.4V234.6Q392 233 393.6 233Z" fill="#4b9f70"/><path d="M402 233V238H407Z" fill="#cfe8da"/><path d="M415.6 233H424L429 238V250.4Q429 252 427.4 252H415.6Q414 252 414 250.4V234.6Q414 233 415.6 233Z" fill="#e45868"/><path d="M424 233V238H429Z" fill="#f8d3d8"/><text x="399.4" y="250" text-anchor="middle" font-family="Liberation Sans, sans-serif" font-weight="700" font-size="14.8" fill="#fff">x</text><text x="421.6" y="247.7" text-anchor="middle" font-family="Liberation Sans, sans-serif" font-weight="700" font-size="9.4" fill="#fff" textLength="12.2" lengthAdjust="spacingAndGlyphs">PDF</text><circle cx="602.4" cy="240.5" r="1.6" fill="#505050"/><circle cx="602.4" cy="245.6" r="1.6" fill="#505050"/><circle cx="602.4" cy="250.7" r="1.6" fill="#505050"/><circle cx="994.5" cy="240.5" r="1.6" fill="#505050"/><circle cx="994.5" cy="245.6" r="1.6" fill="#505050"/><circle cx="994.5" cy="250.7" r="1.6" fill="#505050"/><circle cx="1198.5" cy="240.5" r="1.6" fill="#505050"/><circle cx="1198.5" cy="245.6" r="1.6" fill="#505050"/><circle cx="1198.5" cy="250.7" r="1.6" fill="#505050"/><circle cx="1346.2" cy="240.5" r="1.6" fill="#505050"/><circle cx="1346.2" cy="245.6" r="1.6" fill="#505050"/><circle cx="1346.2" cy="250.7" r="1.6" fill="#505050"/><circle cx="1535.2" cy="240.5" r="1.6" fill="#505050"/><circle cx="1535.2" cy="245.6" r="1.6" fill="#505050"/><circle cx="1535.2" cy="250.7" r="1.6" fill="#505050"/><circle cx="1753.2" cy="240.5" r="1.6" fill="#505050"/><circle cx="1753.2" cy="245.6" r="1.6" fill="#505050"/><circle cx="1753.2" cy="250.7" r="1.6" fill="#505050"/><path d="M897.1 277.3H908.9L904 283.7V288.2L901.7 290.4V283.7Z" fill="#4850e0" stroke="#4850e0" stroke-width="0.5" stroke-linejoin="round"/><circle cx="977.2" cy="279.9" r="5.9" fill="#fff" stroke="#7a7a7a" stroke-width="1"/><circle cx="1036.4" cy="279.9" r="5.9" fill="#fff" stroke="#7a7a7a" stroke-width="1"/><circle cx="1159.6" cy="279.9" r="5.9" fill="#fff" stroke="#7a7a7a" stroke-width="1"/><circle cx="1218.8" cy="279.9" r="5.9" fill="#fff" stroke="#7a7a7a" stroke-width="1"/><circle cx="1341.7" cy="279.9" r="5.9" fill="#fff" stroke="#7a7a7a" stroke-width="1"/><circle cx="1400.9" cy="279.9" r="5.9" fill="#fff" stroke="#7a7a7a" stroke-width="1"/><circle cx="1523.6" cy="279.9" r="5.9" fill="#fff" stroke="#7a7a7a" stroke-width="1"/><circle cx="1582.8" cy="279.9" r="5.9" fill="#fff" stroke="#7a7a7a" stroke-width="1"/><circle cx="1705.8" cy="279.9" r="5.9" fill="#fff" stroke="#7a7a7a" stroke-width="1"/><circle cx="1765.0" cy="279.9" r="5.9" fill="#fff" stroke="#7a7a7a" stroke-width="1"/><path d="M936.8 316.90000000000003L945.2 325.3M945.2 316.90000000000003L936.8 325.3" stroke="#dc3545" stroke-width="2"/><path d="M1117.4 320.6L1121.7 324.90000000000003L1130.0000000000002 316.2" stroke="#157a55" stroke-width="1.9" fill="none"/><path d="M1301.2 316.90000000000003L1309.6000000000001 325.3M1309.6000000000001 316.90000000000003L1301.2 325.3" stroke="#dc3545" stroke-width="2"/><path d="M1481.4 320.6L1485.7 324.90000000000003L1494.0000000000002 316.2" stroke="#157a55" stroke-width="1.9" fill="none"/><path d="M1665.2 316.90000000000003L1673.6000000000001 325.3M1673.6000000000001 316.90000000000003L1665.2 325.3" stroke="#dc3545" stroke-width="2"/><path d="M936.8 347.90000000000003L945.2 356.3M945.2 347.90000000000003L936.8 356.3" stroke="#dc3545" stroke-width="2"/><path d="M1117.4 351.6L1121.7 355.90000000000003L1130.0000000000002 347.2" stroke="#157a55" stroke-width="1.9" fill="none"/><path d="M1301.2 347.90000000000003L1309.6000000000001 356.3M1309.6000000000001 347.90000000000003L1301.2 356.3" stroke="#dc3545" stroke-width="2"/><path d="M1481.4 351.6L1485.7 355.90000000000003L1494.0000000000002 347.2" stroke="#157a55" stroke-width="1.9" fill="none"/><path d="M1665.2 347.90000000000003L1673.6000000000001 356.3M1673.6000000000001 347.90000000000003L1665.2 356.3" stroke="#dc3545" stroke-width="2"/><path d="M936.8 378.90000000000003L945.2 387.3M945.2 378.90000000000003L936.8 387.3" stroke="#dc3545" stroke-width="2"/><path d="M1119.2 378.90000000000003L1127.6000000000001 387.3M1127.6000000000001 378.90000000000003L1119.2 387.3" stroke="#dc3545" stroke-width="2"/><path d="M1301.2 378.90000000000003L1309.6000000000001 387.3M1309.6000000000001 378.90000000000003L1301.2 387.3" stroke="#dc3545" stroke-width="2"/><path d="M1481.4 382.6L1485.7 386.90000000000003L1494.0000000000002 378.2" stroke="#157a55" stroke-width="1.9" fill="none"/><path d="M1665.2 378.90000000000003L1673.6000000000001 387.3M1673.6000000000001 378.90000000000003L1665.2 387.3" stroke="#dc3545" stroke-width="2"/><path d="M936.8 409.90000000000003L945.2 418.3M945.2 409.90000000000003L936.8 418.3" stroke="#dc3545" stroke-width="2"/><path d="M1117.4 413.6L1121.7 417.90000000000003L1130.0000000000002 409.2" stroke="#157a55" stroke-width="1.9" fill="none"/><path d="M1301.2 409.90000000000003L1309.6000000000001 418.3M1309.6000000000001 409.90000000000003L1301.2 418.3" stroke="#dc3545" stroke-width="2"/><path d="M1481.4 413.6L1485.7 417.90000000000003L1494.0000000000002 409.2" stroke="#157a55" stroke-width="1.9" fill="none"/><path d="M1665.2 409.90000000000003L1673.6000000000001 418.3M1673.6000000000001 409.90000000000003L1665.2 418.3" stroke="#dc3545" stroke-width="2"/><path d="M936.8 440.90000000000003L945.2 449.3M945.2 440.90000000000003L936.8 449.3" stroke="#dc3545" stroke-width="2"/><path d="M1117.4 444.6L1121.7 448.90000000000003L1130.0000000000002 440.2" stroke="#157a55" stroke-width="1.9" fill="none"/><path d="M1299.4 444.6L1303.7 448.90000000000003L1312.0000000000002 440.2" stroke="#157a55" stroke-width="1.9" fill="none"/><path d="M1483.2 440.90000000000003L1491.6000000000001 449.3M1491.6000000000001 440.90000000000003L1483.2 449.3" stroke="#dc3545" stroke-width="2"/><path d="M1665.2 440.90000000000003L1673.6000000000001 449.3M1673.6000000000001 440.90000000000003L1665.2 449.3" stroke="#dc3545" stroke-width="2"/><path d="M936.8 471.90000000000003L945.2 480.3M945.2 471.90000000000003L936.8 480.3" stroke="#dc3545" stroke-width="2"/><path d="M1117.4 475.6L1121.7 479.90000000000003L1130.0000000000002 471.2" stroke="#157a55" stroke-width="1.9" fill="none"/><path d="M1299.4 475.6L1303.7 479.90000000000003L1312.0000000000002 471.2" stroke="#157a55" stroke-width="1.9" fill="none"/><path d="M1483.2 471.90000000000003L1491.6000000000001 480.3M1491.6000000000001 471.90000000000003L1483.2 480.3" stroke="#dc3545" stroke-width="2"/><path d="M1665.2 471.90000000000003L1673.6000000000001 480.3M1673.6000000000001 471.90000000000003L1665.2 480.3" stroke="#dc3545" stroke-width="2"/><path d="M936.8 502.90000000000003L945.2 511.3M945.2 502.90000000000003L936.8 511.3" stroke="#dc3545" stroke-width="2"/><path d="M1119.2 502.90000000000003L1127.6000000000001 511.3M1127.6000000000001 502.90000000000003L1119.2 511.3" stroke="#dc3545" stroke-width="2"/><path d="M1301.2 502.90000000000003L1309.6000000000001 511.3M1309.6000000000001 502.90000000000003L1301.2 511.3" stroke="#dc3545" stroke-width="2"/><path d="M1481.4 506.6L1485.7 510.90000000000003L1494.0000000000002 502.2" stroke="#157a55" stroke-width="1.9" fill="none"/><path d="M1665.2 502.90000000000003L1673.6000000000001 511.3M1673.6000000000001 502.90000000000003L1665.2 511.3" stroke="#dc3545" stroke-width="2"/><path d="M936.8 533.9L945.2 542.3000000000001M945.2 533.9L936.8 542.3000000000001" stroke="#dc3545" stroke-width="2"/><path d="M1117.4 537.6L1121.7 541.9000000000001L1130.0000000000002 533.2" stroke="#157a55" stroke-width="1.9" fill="none"/><path d="M1301.2 533.9L1309.6000000000001 542.3000000000001M1309.6000000000001 533.9L1301.2 542.3000000000001" stroke="#dc3545" stroke-width="2"/><path d="M1481.4 537.6L1485.7 541.9000000000001L1494.0000000000002 533.2" stroke="#157a55" stroke-width="1.9" fill="none"/><path d="M1665.2 533.9L1673.6000000000001 542.3000000000001M1673.6000000000001 533.9L1665.2 542.3000000000001" stroke="#dc3545" stroke-width="2"/><path d="M936.8 564.9L945.2 573.3000000000001M945.2 564.9L936.8 573.3000000000001" stroke="#dc3545" stroke-width="2"/><path d="M1117.4 568.6L1121.7 572.9000000000001L1130.0000000000002 564.2" stroke="#157a55" stroke-width="1.9" fill="none"/><path d="M1301.2 564.9L1309.6000000000001 573.3000000000001M1309.6000000000001 564.9L1301.2 573.3000000000001" stroke="#dc3545" stroke-width="2"/><path d="M1481.4 568.6L1485.7 572.9000000000001L1494.0000000000002 564.2" stroke="#157a55" stroke-width="1.9" fill="none"/><path d="M1665.2 564.9L1673.6000000000001 573.3000000000001M1673.6000000000001 564.9L1665.2 573.3000000000001" stroke="#dc3545" stroke-width="2"/><path d="M935.0 599.6L939.3000000000001 603.9000000000001L947.6 595.2" stroke="#157a55" stroke-width="1.9" fill="none"/><path d="M1119.2 595.9L1127.6000000000001 604.3000000000001M1127.6000000000001 595.9L1119.2 604.3000000000001" stroke="#dc3545" stroke-width="2"/><path d="M1301.2 595.9L1309.6000000000001 604.3000000000001M1309.6000000000001 595.9L1301.2 604.3000000000001" stroke="#dc3545" stroke-width="2"/><path d="M1481.4 599.6L1485.7 603.9000000000001L1494.0000000000002 595.2" stroke="#157a55" stroke-width="1.9" fill="none"/><path d="M1663.4 599.6L1667.7 603.9000000000001L1676.0000000000002 595.2" stroke="#157a55" stroke-width="1.9" fill="none"/><path d="M936.8 626.9L945.2 635.3000000000001M945.2 626.9L936.8 635.3000000000001" stroke="#dc3545" stroke-width="2"/><path d="M1117.4 630.6L1121.7 634.9000000000001L1130.0000000000002 626.2" stroke="#157a55" stroke-width="1.9" fill="none"/><path d="M1301.2 626.9L1309.6000000000001 635.3000000000001M1309.6000000000001 626.9L1301.2 635.3000000000001" stroke="#dc3545" stroke-width="2"/><path d="M1481.4 630.6L1485.7 634.9000000000001L1494.0000000000002 626.2" stroke="#157a55" stroke-width="1.9" fill="none"/><path d="M1665.2 626.9L1673.6000000000001 635.3000000000001M1673.6000000000001 626.9L1665.2 635.3000000000001" stroke="#dc3545" stroke-width="2"/><path d="M936.8 657.9L945.2 666.3000000000001M945.2 657.9L936.8 666.3000000000001" stroke="#dc3545" stroke-width="2"/><path d="M1119.2 657.9L1127.6000000000001 666.3000000000001M1127.6000000000001 657.9L1119.2 666.3000000000001" stroke="#dc3545" stroke-width="2"/><path d="M1301.2 657.9L1309.6000000000001 666.3000000000001M1309.6000000000001 657.9L1301.2 666.3000000000001" stroke="#dc3545" stroke-width="2"/><path d="M1481.4 661.6L1485.7 665.9000000000001L1494.0000000000002 657.2" stroke="#157a55" stroke-width="1.9" fill="none"/><path d="M1665.2 657.9L1673.6000000000001 666.3000000000001M1673.6000000000001 657.9L1665.2 666.3000000000001" stroke="#dc3545" stroke-width="2"/><path d="M936.8 688.9L945.2 697.3000000000001M945.2 688.9L936.8 697.3000000000001" stroke="#dc3545" stroke-width="2"/><path d="M1119.2 688.9L1127.6000000000001 697.3000000000001M1127.6000000000001 688.9L1119.2 697.3000000000001" stroke="#dc3545" stroke-width="2"/><path d="M1301.2 688.9L1309.6000000000001 697.3000000000001M1309.6000000000001 688.9L1301.2 697.3000000000001" stroke="#dc3545" stroke-width="2"/><path d="M1481.4 692.6L1485.7 696.9000000000001L1494.0000000000002 688.2" stroke="#157a55" stroke-width="1.9" fill="none"/><path d="M1665.2 688.9L1673.6000000000001 697.3000000000001M1673.6000000000001 688.9L1665.2 697.3000000000001" stroke="#dc3545" stroke-width="2"/><path d="M936.8 719.9L945.2 728.3000000000001M945.2 719.9L936.8 728.3000000000001" stroke="#dc3545" stroke-width="2"/><path d="M1117.4 723.6L1121.7 727.9000000000001L1130.0000000000002 719.2" stroke="#157a55" stroke-width="1.9" fill="none"/><path d="M1299.4 723.6L1303.7 727.9000000000001L1312.0000000000002 719.2" stroke="#157a55" stroke-width="1.9" fill="none"/><path d="M1483.2 719.9L1491.6000000000001 728.3000000000001M1491.6000000000001 719.9L1483.2 728.3000000000001" stroke="#dc3545" stroke-width="2"/><path d="M1665.2 719.9L1673.6000000000001 728.3000000000001M1673.6000000000001 719.9L1665.2 728.3000000000001" stroke="#dc3545" stroke-width="2"/><path d="M936.8 750.9L945.2 759.3000000000001M945.2 750.9L936.8 759.3000000000001" stroke="#dc3545" stroke-width="2"/><path d="M1117.4 754.6L1121.7 758.9000000000001L1130.0000000000002 750.2" stroke="#157a55" stroke-width="1.9" fill="none"/><path d="M1299.4 754.6L1303.7 758.9000000000001L1312.0000000000002 750.2" stroke="#157a55" stroke-width="1.9" fill="none"/><path d="M1481.4 754.6L1485.7 758.9000000000001L1494.0000000000002 750.2" stroke="#157a55" stroke-width="1.9" fill="none"/><path d="M1665.2 750.9L1673.6000000000001 759.3000000000001M1673.6000000000001 750.9L1665.2 759.3000000000001" stroke="#dc3545" stroke-width="2"/><path d="M936.8 781.9L945.2 790.3000000000001M945.2 781.9L936.8 790.3000000000001" stroke="#dc3545" stroke-width="2"/><path d="M1117.4 785.6L1121.7 789.9000000000001L1130.0000000000002 781.2" stroke="#157a55" stroke-width="1.9" fill="none"/><path d="M1299.4 785.6L1303.7 789.9000000000001L1312.0000000000002 781.2" stroke="#157a55" stroke-width="1.9" fill="none"/><path d="M1483.2 781.9L1491.6000000000001 790.3000000000001M1491.6000000000001 781.9L1483.2 790.3000000000001" stroke="#dc3545" stroke-width="2"/><path d="M1665.2 781.9L1673.6000000000001 790.3000000000001M1673.6000000000001 781.9L1665.2 790.3000000000001" stroke="#dc3545" stroke-width="2"/><path d="M936.8 812.9L945.2 821.3000000000001M945.2 812.9L936.8 821.3000000000001" stroke="#dc3545" stroke-width="2"/><path d="M1117.4 816.6L1121.7 820.9000000000001L1130.0000000000002 812.2" stroke="#157a55" stroke-width="1.9" fill="none"/><path d="M1299.4 816.6L1303.7 820.9000000000001L1312.0000000000002 812.2" stroke="#157a55" stroke-width="1.9" fill="none"/><path d="M1483.2 812.9L1491.6000000000001 821.3000000000001M1491.6000000000001 812.9L1483.2 821.3000000000001" stroke="#dc3545" stroke-width="2"/><path d="M1665.2 812.9L1673.6000000000001 821.3000000000001M1673.6000000000001 812.9L1665.2 821.3000000000001" stroke="#dc3545" stroke-width="2"/><path d="M936.8 843.9L945.2 852.3000000000001M945.2 843.9L936.8 852.3000000000001" stroke="#dc3545" stroke-width="2"/><path d="M1117.4 847.6L1121.7 851.9000000000001L1130.0000000000002 843.2" stroke="#157a55" stroke-width="1.9" fill="none"/><path d="M1299.4 847.6L1303.7 851.9000000000001L1312.0000000000002 843.2" stroke="#157a55" stroke-width="1.9" fill="none"/><path d="M1483.2 843.9L1491.6000000000001 852.3000000000001M1491.6000000000001 843.9L1483.2 852.3000000000001" stroke="#dc3545" stroke-width="2"/><path d="M1665.2 843.9L1673.6000000000001 852.3000000000001M1673.6000000000001 843.9L1665.2 852.3000000000001" stroke="#dc3545" stroke-width="2"/><path d="M936.8 874.9L945.2 883.3000000000001M945.2 874.9L936.8 883.3000000000001" stroke="#dc3545" stroke-width="2"/><path d="M1117.4 878.6L1121.7 882.9000000000001L1130.0000000000002 874.2" stroke="#157a55" stroke-width="1.9" fill="none"/><path d="M1299.4 878.6L1303.7 882.9000000000001L1312.0000000000002 874.2" stroke="#157a55" stroke-width="1.9" fill="none"/><path d="M1483.2 874.9L1491.6000000000001 883.3000000000001M1491.6000000000001 874.9L1483.2 883.3000000000001" stroke="#dc3545" stroke-width="2"/><path d="M1665.2 874.9L1673.6000000000001 883.3000000000001M1673.6000000000001 874.9L1665.2 883.3000000000001" stroke="#dc3545" stroke-width="2"/><path d="M936.8 905.9L945.2 914.3000000000001M945.2 905.9L936.8 914.3000000000001" stroke="#dc3545" stroke-width="2"/><path d="M1117.4 909.6L1121.7 913.9000000000001L1130.0000000000002 905.2" stroke="#157a55" stroke-width="1.9" fill="none"/><path d="M1301.2 905.9L1309.6000000000001 914.3000000000001M1309.6000000000001 905.9L1301.2 914.3000000000001" stroke="#dc3545" stroke-width="2"/><path d="M1481.4 909.6L1485.7 913.9000000000001L1494.0000000000002 905.2" stroke="#157a55" stroke-width="1.9" fill="none"/><path d="M1665.2 905.9L1673.6000000000001 914.3000000000001M1673.6000000000001 905.9L1665.2 914.3000000000001" stroke="#dc3545" stroke-width="2"/><polygon points="423.20,692.00 415.80,704.82 401.00,704.82 393.60,692.00 401.00,679.18 415.80,679.18" fill="#e3e6fb"/><polygon points="455.80,692.00 448.40,704.82 433.60,704.82 426.20,692.00 433.60,679.18 448.40,679.18" fill="#e3e6fb"/><polygon points="488.40,692.00 481.00,704.82 466.20,704.82 458.80,692.00 466.20,679.18 481.00,679.18" fill="#e3e6fb"/><path d="M400.8 692Q408.4 680.6 416 692Q408.4 703.4 400.8 692Z" fill="#8d90ea"/><circle cx="408.4" cy="692" r="3.4" fill="#e3e6fb"/><circle cx="408.4" cy="692" r="2.3" fill="#2f34d2"/><circle cx="407.4" cy="691" r="1" fill="#e3e6fb"/><path d="M440.4 687.4H436.4Q434.8 687.4 434.8 689V696.4Q434.8 698 436.4 698H443.8Q445.4 698 445.4 696.4V692.4" fill="none" stroke="#2f34d2" stroke-width="1.3" stroke-linecap="round"/><path d="M438.8 694L439.4 691.4L445 685.8Q445.8 685.2 446.6 686L447.2 686.6Q447.8 687.4 447.2 688.2L441.6 693.6Z" fill="none" stroke="#2f34d2" stroke-width="1.2" stroke-linejoin="round"/><path d="M468 688.4H479.2M471.2 688.2Q471.4 686 473.6 686Q475.8 686 476 688.2M469.2 688.6L469.8 697.2Q469.9 698.4 471.2 698.4H476Q477.3 698.4 477.4 697.2L478 688.6" fill="none" stroke="#2f34d2" stroke-width="1.3" stroke-linecap="round"/><path d="M471.8 690.6V696.2M473.6 690.6V696.2M475.4 690.6V696.2" stroke="#7a7eea" stroke-width="0.9"/><path d="M338.2 944V952.6" stroke="#666" stroke-width="1.5"/><path d="M346.2 944V952.6L339.4 948.3Z" fill="#666"/><path d="M377.6 944V952.6L370.8 948.3Z" fill="#666"/><path d="M463.2 944V952.6L470 948.3Z" fill="#111"/><path d="M493.6 944V952.6L500.2 948.3Z" fill="#111"/><path d="M501 944V952.6" stroke="#111" stroke-width="1.5"/><path d="M715.4 945.2H723.6L719.5 951.4Z" fill="#2f34d2"/><path d="M1821.2 945.6A6.1 6.1 0 1 1 1816 942.4" fill="none" stroke="#111" stroke-width="1.7"/><path d="M1815 939.6L1820.6 942.8L1815 946Z" fill="#111"/></svg>
<div class="abs" style="left:1857px;top:0;width:15px;height:966px;background:#fcfcfc"></div>
<div class="abs" style="left:1860px;top:23px;width:9px;height:905px;background:#8b8b8b;border-radius:4.5px"></div>
<svg style="left:1857px;top:0" width="15" height="966"><path d="M3 15H12L7.5 10Z" fill="#8b8b8b"/><path d="M3 951H12L7.5 956Z" fill="#8b8b8b"/></svg>
<svg style="left:0;top:0" width="1872" height="966"><path d="M0 0H7.5Q0 0.5 0 7.5Z" fill="#2e2e2e"/><path d="M1872 0H1864.5Q1872 0.5 1872 7.5Z" fill="#2e2e2e"/><path d="M0 966H7.5Q0 965.5 0 958.5Z" fill="#2e2e2e"/><path d="M1872 966H1864.5Q1872 965.5 1872 958.5Z" fill="#2e2e2e"/></svg>
</body></html>
